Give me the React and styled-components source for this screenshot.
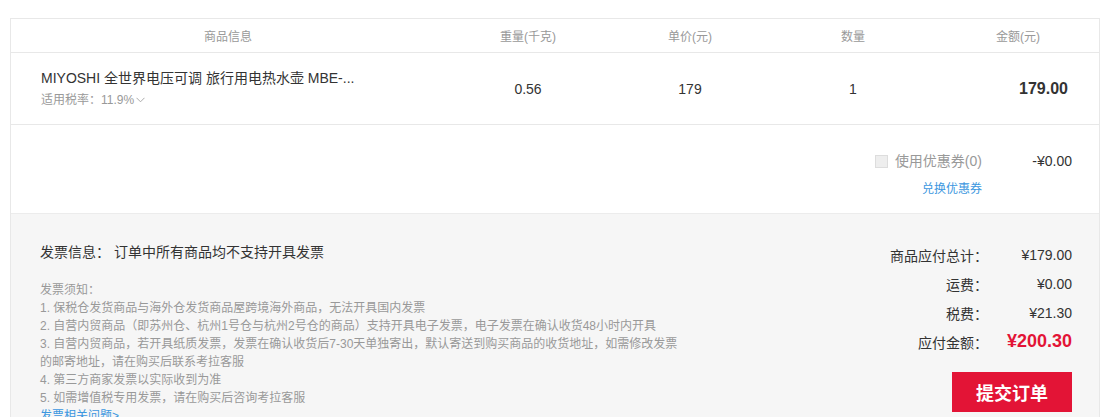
import React from "react"
import styled, { createGlobalStyle } from "styled-components"

const GlobalStyle = createGlobalStyle`
  body {
    margin: 0;
    background: #ffffff;
    font-family: "Liberation Sans", "Noto Sans CJK SC", sans-serif;
    color: #333333;
  }
`

const Page = styled.div`
  padding: 18px 0 0 10px;
  width: 1090px;
`

const Box = styled.div`
  border: 1px solid #e8e8e8;
  border-bottom: none;
`

const cols = "434px 166px 158px 168px 1fr"

const HeadRow = styled.div`
  display: grid;
  grid-template-columns: ${cols};
  height: 33px;
  border-bottom: 1px solid #e8e8e8;
  align-items: center;
`

const HeadCell = styled.div`
  text-align: center;
  font-size: 12px;
  color: #999999;
`

const ItemRow = styled.div`
  display: grid;
  grid-template-columns: ${cols};
  height: 71px;
  border-bottom: 1px solid #e8e8e8;
  align-items: center;
`

const Cell = styled.div`
  text-align: ${p => p.align || "center"};
  padding: ${p => p.pad || "0"};
  font-size: ${p => (p.bold ? "16px" : "14px")};
  font-weight: ${p => (p.bold ? 700 : 400)};
  color: #333333;
`

const ProductName = styled.div`
  font-size: 14px;
  line-height: 20px;
  color: #333333;
  white-space: nowrap;
`

const TaxRate = styled.div`
  margin-top: 2px;
  font-size: 12px;
  line-height: 20px;
  color: #999999;
  display: flex;
  align-items: center;
  gap: 2px;
`

const CouponArea = styled.div`
  height: 88px;
  display: flex;
  flex-direction: column;
  align-items: flex-end;
  padding: 26px 27px 0 0;
  box-sizing: border-box;
`

const CouponLine = styled.div`
  display: flex;
  align-items: center;
`

const Check = styled.span`
  width: 13px;
  height: 13px;
  box-sizing: border-box;
  border: 1px solid #dddddd;
  background: #eeeeee;
  margin-right: 7px;
`

const CouponLabel = styled.span`
  font-size: 14px;
  line-height: 20px;
  color: #999999;
`

const CouponValue = styled.span`
  width: 90px;
  text-align: right;
  font-size: 14px;
  color: #333333;
`

const Exchange = styled.a`
  margin: 10px 90px 0 0;
  font-size: 12px;
  line-height: 16px;
  color: #3c97e0;
  text-decoration: none;
`

const Footer = styled.div`
  background: #f6f6f6;
  border-top: 1px solid #ececec;
  display: flex;
  justify-content: space-between;
  padding: 0 27px 0 29px;
  height: 204px;
  overflow: hidden;
`

const Invoice = styled.div`
  padding-top: 28px;
`

const InvoiceTitle = styled.div`
  font-size: 14px;
  line-height: 20px;
  color: #333333;
`

const Notice = styled.div`
  margin-top: 19px;
  font-size: 12px;
  line-height: 18px;
  color: #999999;
`

const HelpLink = styled.a`
  display: block;
  font-size: 12px;
  line-height: 18px;
  color: #3c97e0;
  text-decoration: none;
`

const Summary = styled.div`
  padding-top: 26px;
  display: flex;
  flex-direction: column;
  align-items: flex-end;
`

const SumRow = styled.div`
  display: flex;
  align-items: center;
  height: 29px;
`

const SumLabel = styled.span`
  font-size: 14px;
  color: #333333;
  text-align: right;
`

const SumValue = styled.span`
  width: 84px;
  text-align: right;
  font-size: ${p => (p.total ? "18px" : "14px")};
  font-weight: ${p => (p.total ? 700 : 400)};
  color: ${p => (p.total ? "#e31436" : "#333333")};
`

const SubmitButton = styled.button`
  margin-top: 16px;
  width: 120px;
  height: 40px;
  border: none;
  background: #e31436;
  color: #ffffff;
  font-family: inherit;
  font-size: 18px;
  font-weight: 700;
  cursor: pointer;
`

const Chevron = () => (
  <svg width="9" height="6" viewBox="0 0 9 6">
    <path d="M0.5 0.8 L4.5 4.8 L8.5 0.8" fill="none" stroke="#aaaaaa" strokeWidth="1" />
  </svg>
)

const notices = [
  "发票须知：",
  "1. 保税仓发货商品与海外仓发货商品屋跨境海外商品，无法开具国内发票",
  "2. 自营内贸商品（即苏州仓、杭州1号仓与杭州2号仓的商品）支持开具电子发票，电子发票在确认收货48小时内开具",
  "3. 自营内贸商品，若开具纸质发票，发票在确认收货后7-30天单独寄出，默认寄送到购买商品的收货地址，如需修改发票",
  "的邮寄地址，请在购买后联系考拉客服",
  "4. 第三方商家发票以实际收到为准",
  "5. 如需增值税专用发票，请在购买后咨询考拉客服",
]

const summary = [
  ["商品应付总计：", "¥179.00"],
  ["运费：", "¥0.00"],
  ["税费：", "¥21.30"],
]

export default function App() {
  return (
    <Page>
      <GlobalStyle />
      <Box>
        <HeadRow>
          <HeadCell>商品信息</HeadCell>
          <HeadCell>重量(千克)</HeadCell>
          <HeadCell>单价(元)</HeadCell>
          <HeadCell>数量</HeadCell>
          <HeadCell>金额(元)</HeadCell>
        </HeadRow>
        <ItemRow>
          <Cell align="left" pad="0 0 0 30px">
            <ProductName>MIYOSHI 全世界电压可调 旅行用电热水壶 MBE-...</ProductName>
            <TaxRate>
              适用税率：11.9%
              <Chevron />
            </TaxRate>
          </Cell>
          <Cell>0.56</Cell>
          <Cell>179</Cell>
          <Cell>1</Cell>
          <Cell align="right" pad="0 31px 0 0" bold>179.00</Cell>
        </ItemRow>
        <CouponArea>
          <CouponLine>
            <Check />
            <CouponLabel>使用优惠券(0)</CouponLabel>
            <CouponValue>-¥0.00</CouponValue>
          </CouponLine>
          <Exchange href="#">兑换优惠券</Exchange>
        </CouponArea>
        <Footer>
          <Invoice>
            <InvoiceTitle>发票信息： 订单中所有商品均不支持开具发票</InvoiceTitle>
            <Notice>
              {notices.map(n => (
                <div key={n}>{n}</div>
              ))}
              <HelpLink href="#">发票相关问题&gt;</HelpLink>
            </Notice>
          </Invoice>
          <Summary>
            {summary.map(([l, v]) => (
              <SumRow key={l}>
                <SumLabel>{l}</SumLabel>
                <SumValue>{v}</SumValue>
              </SumRow>
            ))}
            <SumRow>
              <SumLabel>应付金额：</SumLabel>
              <SumValue total>¥200.30</SumValue>
            </SumRow>
            <SubmitButton>提交订单</SubmitButton>
          </Summary>
        </Footer>
      </Box>
    </Page>
  )
}
